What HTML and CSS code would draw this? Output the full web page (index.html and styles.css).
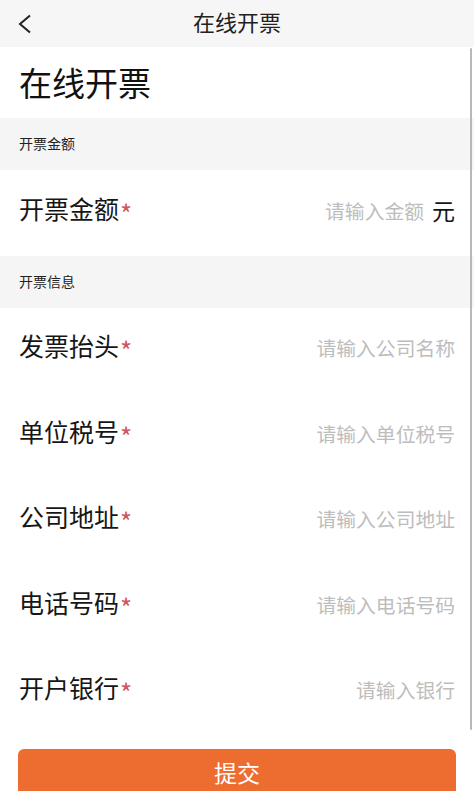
FILE: index.html
```html
<!DOCTYPE html>
<html lang="zh">
<head>
<meta charset="utf-8">
<title>在线开票</title>
<link rel="stylesheet" href="styles.css">
</head>
<body>
<div class="page">
  <header class="nav">
    <span class="back"><svg width="16" height="20" viewBox="0 0 16 20"><path d="M13 1.5 L3 10 L13 18.5" fill="none" stroke="#222" stroke-width="2"/></svg></span>
    <span class="nav-title">在线开票</span>
  </header>
  <div class="content">
    <div class="page-title">在线开票</div>
    <div class="section-head">开票金额</div>
    <div class="row">
      <span class="label">开票金额<i class="req">*</i></span>
      <span class="value"><span class="ph">请输入金额</span><span class="unit">元</span></span>
    </div>
    <div class="section-head">开票信息</div>
    <div class="row">
      <span class="label">发票抬头<i class="req">*</i></span>
      <span class="ph">请输入公司名称</span>
    </div>
    <div class="row">
      <span class="label">单位税号<i class="req">*</i></span>
      <span class="ph">请输入单位税号</span>
    </div>
    <div class="row">
      <span class="label">公司地址<i class="req">*</i></span>
      <span class="ph">请输入公司地址</span>
    </div>
    <div class="row">
      <span class="label">电话号码<i class="req">*</i></span>
      <span class="ph">请输入电话号码</span>
    </div>
    <div class="row">
      <span class="label">开户银行<i class="req">*</i></span>
      <span class="ph">请输入银行</span>
    </div>
    <div class="btn-wrap"><button class="submit">提交</button></div>
    <div class="scrollbar"></div>
  </div>
</div>
</body>
</html>
```
FILE: styles.css
```css
html, body {
  margin: 0;
  padding: 0;
  background: #fff;
  font-family: "Noto Sans CJK SC", "Noto Sans", sans-serif;
  color: #1c1c1c;
}
.page {
  width: 474px;
  height: 791px;
  overflow: hidden;
}
.nav {
  height: 47px;
  background: #f6f6f6;
  display: flex;
  align-items: center;
  justify-content: center;
  position: relative;
}
.back {
  position: absolute;
  left: 17px;
  top: 14px;
  width: 16px;
  height: 20px;
  display: flex;
}
.nav-title {
  font-size: 22px;
  line-height: 1;
  color: #222;
  margin-top: -5px;
}
.content {
  position: relative;
}
.page-title {
  height: 71px;
  display: flex;
  align-items: center;
  padding-left: 19px;
  font-size: 33px;
  line-height: 1;
  color: #111;
}
.section-head {
  height: 52px;
  background: #f5f5f5;
  display: flex;
  align-items: center;
  padding-left: 19px;
  font-size: 14px;
  line-height: 1;
  color: #222;
  padding-bottom: 2px;
  box-sizing: border-box;
}
.row {
  height: 85.5px;
  display: flex;
  align-items: center;
  justify-content: space-between;
  padding: 0 19px 4px 19px;
  box-sizing: border-box;
}
.label {
  font-size: 25px;
  line-height: 1;
  color: #161616;
  display: flex;
  align-items: flex-start;
}
.req {
  font-style: normal;
  color: #d4545a;
  font-size: 26px;
  line-height: 1;
  margin-left: 1px;
  margin-top: 4px;
}
.value {
  display: flex;
  align-items: center;
  gap: 8px;
}
.ph {
  font-size: 19.8px;
  line-height: 1;
  color: #bdbdbd;
}
.unit {
  font-size: 23px;
  line-height: 1;
  color: #161616;
}
.btn-wrap {
  padding: 14px 18px 0 18px;
}
.submit {
  width: 100%;
  height: 52px;
  border: none;
  border-radius: 6px;
  background: #ec6d2f;
  color: #fff;
  font-family: "Noto Sans CJK SC", sans-serif;
  font-size: 23px;
  padding: 0 0 6px 0;
  display: block;
}
.scrollbar {
  position: absolute;
  right: 2px;
  top: 1px;
  width: 2px;
  height: 682px;
  background: #b8b8b8;
  border-radius: 1px;
}
```
